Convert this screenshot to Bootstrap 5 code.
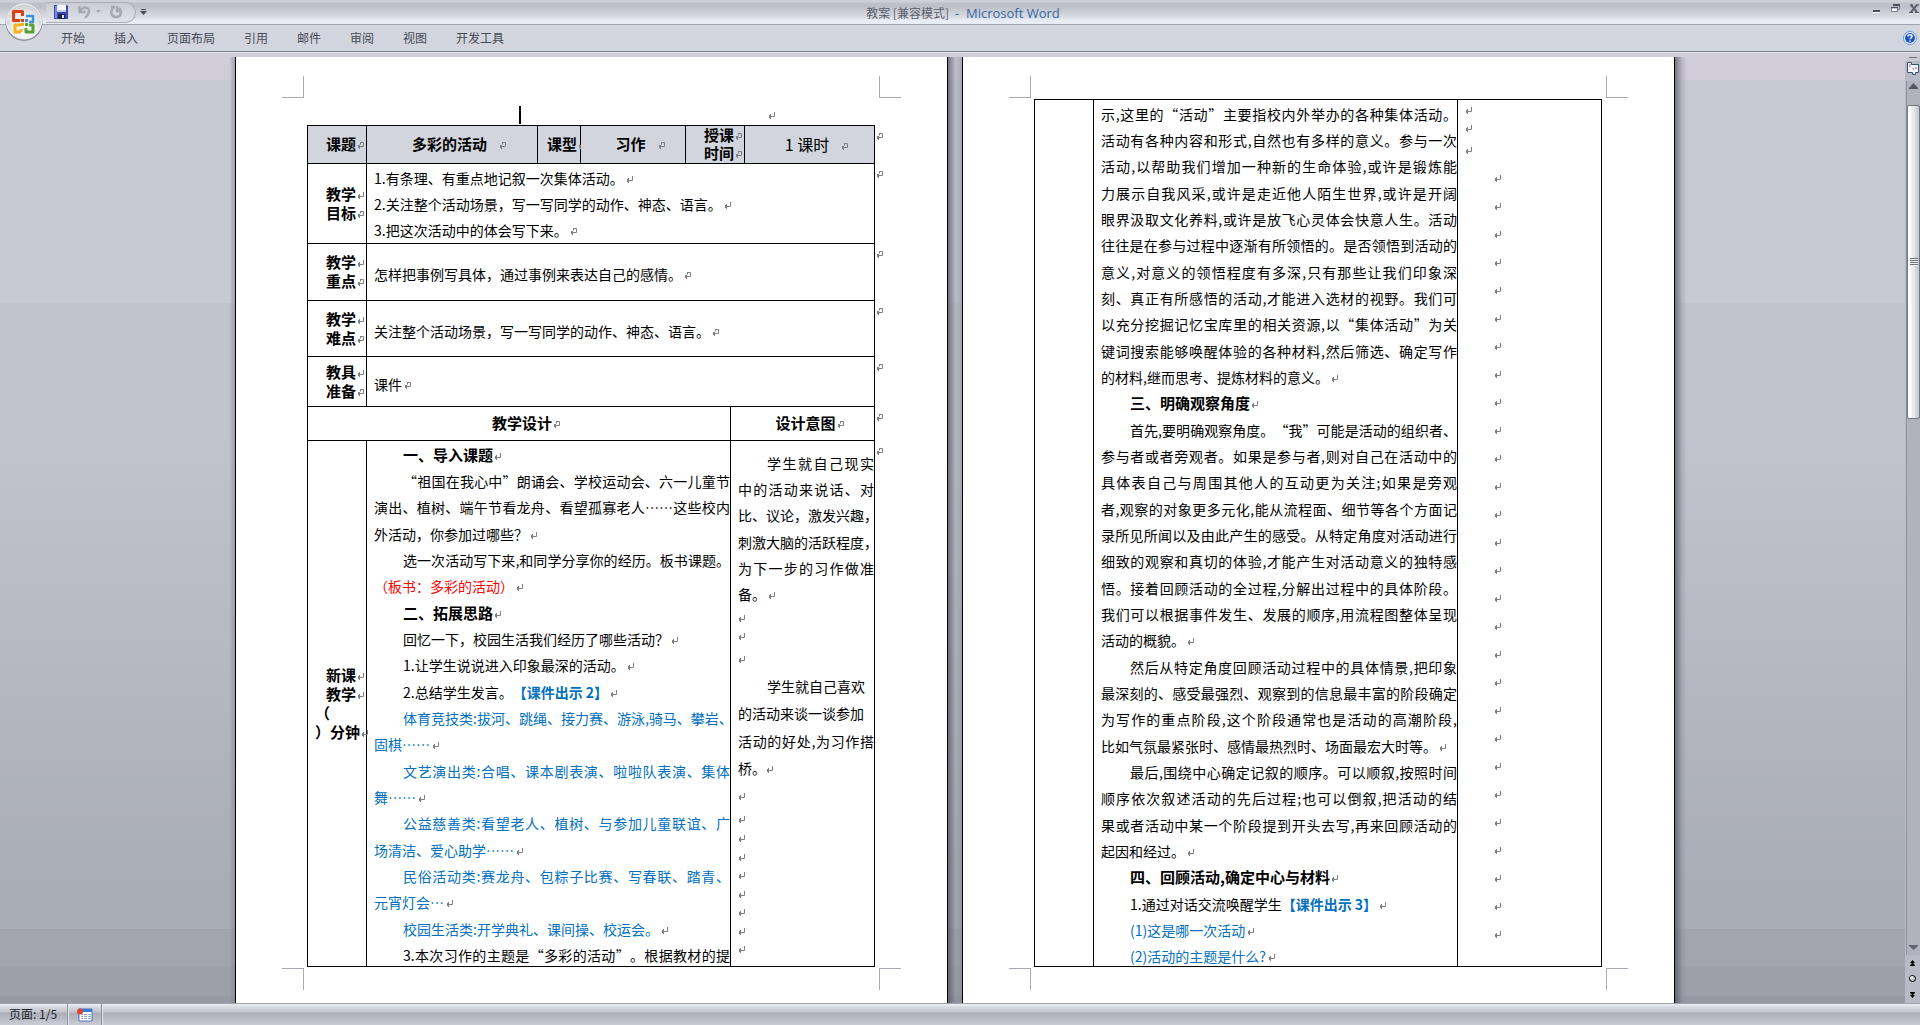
<!DOCTYPE html>
<html lang="zh-CN">
<head>
<meta charset="utf-8">
<meta name="viewport" content="width=device-width, initial-scale=1">
<title>教案 [兼容模式] - Microsoft Word</title>
<link rel="stylesheet" href="https://cdn.jsdelivr.net/npm/bootstrap@5.3.0/dist/css/bootstrap.min.css">
<style>
body{font-family:"Noto Sans CJK SC",sans-serif;font-size:12px;line-height:18px;color:#3b3f48;background:#d2d5dd;text-spacing-trim:space-all}
/* window chrome */
.titlebar{height:25px;background:linear-gradient(#cdd0d7 0 2px,#bdc0c9 3px 7px,#c6c9d0 10px,#d3d6dc 15px,#dcdfe5 18px,#e8ecf5 20px 24px);border-bottom:1px solid #a1a5ad}
.qat{height:21px;width:90px;margin-left:46px;padding-left:8px;border-radius:0 11px 11px 0;border:1px solid #a9adb6;border-left:0;background:linear-gradient(#c9ccd3,#dfe2e9)}
.qat button,.winbtns button,.navbtn,.orb,.helpbtn,.statbtn{border:0;background:none;padding:0;line-height:0;display:block}
.qat .undo{margin-left:10px}
.qat-more{border:0;background:none;padding:0;line-height:0}
.wtitle{font-size:12px;color:#5b606b;padding-left:6px}
.wtitle span{font-family:"Open Sans","Noto Sans CJK SC",sans-serif;font-size:13px;color:#3468a5}
.orb{left:4px;top:2px}
.tabs{height:26px;padding:0 3px 0 61px;gap:29px;background:#d2d5dd}
.tabs a{color:#454a55;text-decoration:none;font-size:12px}
.ribbon-edge{height:6px;background:#d0ced9;border-top:1px solid #7e828a}
.ribbon-edge::after{content:"";display:block;height:1px;background:#e2e4ea}
/* workspace */
.desk{background:linear-gradient(#d0cdd9 0 23px,#c7cad2 23px 246px,#c1c4cc 246px 380px,#a9adb5 830px 872px,#a2a5ad 872px 909px,#9da0a8 909px 939px,#989aa3 939px)}
.pages{gap:14px;padding-left:5px}
.sheet{position:relative;width:713px;flex:none;background:#fff;border:solid #000;border-width:0 1px;padding:0 71px;font-size:14px;color:#000}
.sheet::after,.sheet::before{content:"";position:absolute;top:0;bottom:0}
.sheet::after{left:100%;margin-left:1px;width:12px;background:linear-gradient(90deg,rgba(70,72,82,.65),rgba(120,125,138,.25) 60%,rgba(120,125,138,0))}
.sheet::before{right:100%;margin-right:1px;width:5px;background:linear-gradient(270deg,rgba(120,125,138,.5),rgba(120,125,138,.1))}
.crop{position:absolute;width:22px;height:22px;border:0 solid #a6aab3}
.crop-tl{left:46px;top:19px;border-width:0 1px 1px 0}
.crop-tr{right:46px;top:19px;border-width:0 0 1px 1px}
.crop-bl{left:46px;top:911px;border-width:1px 1px 0 0}
.crop-br{right:46px;top:911px;border-width:1px 0 0 1px}
.toppara{height:68px;padding:48px 101px 0 212px}
.caret{width:2px;height:18px;background:#000}
.topgap{height:42px}
/* lesson plan grid */
.plan{table-layout:fixed;border-collapse:collapse;width:568px}
.plan td,.plan th{border:1px solid #000;padding:0;font-weight:400;text-align:left;vertical-align:middle;white-space:nowrap;position:relative}
.plan .hd>*{background:#d2d5dd;line-height:18px}
.plan .ct{text-align:center;padding:0 0 2px 14px}
.plan .up{vertical-align:top;padding-left:7px}
.plan .mid{padding:4px 0 0 7px}
.plan .lbl{text-align:right;font-size:15px;font-weight:700;line-height:19px;padding:0 2px 2px 0}
.plan .hd .lbl{line-height:18px;padding-bottom:1px}
.plan .bt{font-size:15px;font-weight:700}
.plan .kind{padding:0 0 2px 9px}
.lesson{font-size:16px}
.brace{text-align:left;padding-left:7px}
.ln{line-height:26px;height:26px}
.ln:nth-child(3n){margin-bottom:1px}
.flow{padding-top:1px;margin-bottom:-9px}
.jl{text-align-last:justify}
.ind{padding-left:29px}
.hdg{font-size:15px;font-weight:700}
.blue{color:#0070c0}
.red{color:#f00}
.aside{padding-top:9px}
.l18{line-height:18px;height:18px}
.l19{line-height:19px;height:19px}
.l27{line-height:27px;height:27px}
.l28{line-height:28px;height:28px}
.pm{display:inline-block;width:7px;height:7px;margin-left:2px;vertical-align:1px;background:url("data:image/svg+xml,%3Csvg xmlns='http://www.w3.org/2000/svg' width='7' height='7'%3E%3Cpath d='M6.5 0v4.5H1M2.5 2v5M1.5 3v3' fill='none' stroke='%23808080'/%3E%3C/svg%3E")}
.lbl .pm,.bt .pm,.hdg .pm{margin-left:1px}
.l18 .pm,.l19 .pm,.l27 .pm:only-child,.l28 .pm{margin-left:0}
.pc{background-image:url("data:image/svg+xml,%3Csvg xmlns='http://www.w3.org/2000/svg' width='7' height='7'%3E%3Cpath d='M3 .5h3.5v4H1M3.5 0v2.5M2.5 3v4M1.5 3v3' fill='none' stroke='%23808080'/%3E%3C/svg%3E")}
.ct .sp{margin-left:12px}
.plan .rowend{position:absolute;right:-9px;top:7px}
/* scroll bar and status bar */
.vbar{width:15px;flex:none;background:#b8bbc5}
.track{background:#b0b3bc;border-left:1px solid #8f929b;margin-left:1px}
.scrollup{padding-bottom:12px!important}
.thumb{height:314px;border:1px solid #75777f;border-radius:2px;background:linear-gradient(90deg,#fff 0 3px,#eae8f0 4px 6px,#d3d6de 8px,#c3c6cf)}
.grip{width:8px;height:8px;background:repeating-linear-gradient(#70737b 0 1px,#f0f0f4 1px 2px)}
.status{height:22px;flex:none;border-top:1px solid #a0a3ab;background:linear-gradient(#e6e8ee 0 1px,#d0d3da 4px,#c2c5cd 8px,#abaeb7 9px,#b6b9c2 14px,#c7cad3 20px);color:#20232a}
.status>*{border-right:1px solid #8e9199;box-shadow:1px 0 #e4e6ec}
.pgno{width:68px;padding:0 0 2px 9px}
.stat-ic{width:34px}
</style>
<script src="https://cdn.jsdelivr.net/npm/bootstrap@5.3.0/dist/js/bootstrap.bundle.min.js"></script>
</head>
<body class="vh-100 d-flex flex-column overflow-hidden">
<header class="position-relative">
  <div class="titlebar d-flex align-items-center position-relative">
    <div class="qat d-flex align-items-center">
      <button type="button" aria-label="保存"><svg width="14" height="14" viewBox="0 0 14 14"><path d="M0 0h13l1 1v13H0z" fill="#3c46b4"/><path d="M1 1h2v12H1z" fill="#7f8be0"/><path d="M3 0h9v7H3z" fill="#f4f6ff"/><path d="M3 5h9v2H3z" fill="#c4cdf0"/><path d="M4 9h7v5H4z" fill="#1f2350"/><path d="M8 10h2v3H8z" fill="#dfe4fa"/></svg></button>
      <button type="button" class="undo" aria-label="撤消"><svg width="13" height="14" viewBox="0 0 13 14"><path d="M1.500 1v6h6M2 6c3-5 9-4 9 0 0 3-2 5-4 7" fill="none" stroke="#a4a8b3" stroke-width="2.400"/></svg></button>
      <button type="button" class="ms-1" aria-label="撤消列表"><svg width="7" height="4" viewBox="0 0 7 4"><path d="M1 0h5L3.500 3z" fill="#a4a8b3"/></svg></button>
      <button type="button" class="ms-2" aria-label="重复"><svg width="13" height="14" viewBox="0 0 13 14"><path d="M3 3c-3 3-2 9 3 9 6 0 6-7 3-9M7 1v5h4M1 2h4" fill="none" stroke="#a4a8b3" stroke-width="2.400"/></svg></button>
    </div>
    <button type="button" class="qat-more ms-1" aria-label="自定义快速访问工具栏"><svg width="7" height="6" viewBox="0 0 7 6"><path d="M1 0h5v1H1zM0 2h7L3.500 6z" fill="#4a4d55"/></svg></button>
    <div class="wtitle position-absolute top-0 start-50 translate-middle-x text-nowrap pt-1">教案 [兼容模式] <span>&nbsp;- &nbsp;Microsoft Word</span></div>
    <div class="winbtns d-flex gap-2 ms-auto pb-2">
      <button type="button" aria-label="最小化"><svg width="11" height="12" viewBox="0 0 11 12"><path d="M2 8h7v2H2z" fill="#4b4e57"/><path d="M2 10h7v1H2z" fill="#fff"/></svg></button>
      <button type="button" aria-label="还原"><svg width="11" height="12" viewBox="0 0 11 12"><path d="M3 3.500h6.500v4H8M1.500 5.500h6v4h-6z" fill="none" stroke="#6f7d98"/><path d="M3 2h7v2H3zM1 5h7v1H1z" fill="#484c58"/><path d="M2 7h5v2H2z" fill="#fff"/></svg></button>
      <button type="button" aria-label="关闭"><svg width="11" height="12" viewBox="0 0 11 12"><path d="M2 3l6 7M8 3l-6 7" stroke="#5c6475" stroke-width="2"/><path d="M1 3h3M7 3h3M0 10.500h4M6 10.500h4" stroke="#444854"/><path d="M1 11.500h3M7 11.500h3" stroke="#fff"/></svg></button>
    </div>
  </div>
  <nav class="tabs d-flex align-items-center">
    <a href="#">开始</a><a href="#">插入</a><a href="#">页面布局</a><a href="#">引用</a><a href="#">邮件</a><a href="#">审阅</a><a href="#">视图</a><a href="#">开发工具</a>
    <button type="button" class="helpbtn ms-auto" aria-label="帮助"><svg width="14" height="14" viewBox="0 0 14 14"><circle cx="7" cy="7" r="6.500" fill="#fff" stroke="#5a9bdc"/><circle cx="7" cy="7" r="5" fill="#1c50c8"/><path d="M5 5.500c0-2.200 4-2.200 4 0 0 1.300-2 1.300-2 2.700M7 9.500v1.300" fill="none" stroke="#fff" stroke-width="1.500"/></svg></button>
  </nav>
  <div class="ribbon-edge"></div>
  <button type="button" class="orb position-absolute" aria-label="Office 按钮"><svg width="40" height="40" viewBox="0 0 40 40">
    <defs><radialGradient id="og" cx=".5" cy=".75" r=".7"><stop offset="0" stop-color="#fff"/><stop offset=".6" stop-color="#e6e7ec"/><stop offset="1" stop-color="#b4b7c0"/></radialGradient></defs>
    <circle cx="20" cy="20.500" r="18.500" fill="#8b8e98"/><circle cx="20" cy="19.500" r="17.500" fill="url(#og)" stroke="#f8f8fb"/>
    <path d="M3 19a17 17 0 0 1 34 0q-17-5-34 0z" fill="#fff" opacity=".35"/>
    <g fill="none" stroke-linejoin="round"><path d="M16 18.500H9.500v-9h9V14" stroke="#d9420f" stroke-width="3"/><path d="M22 14h7v6h-4" stroke="#3d93d8" stroke-width="2.500"/><path d="M17 30h-6v-7h6M17 30v-3" stroke="#f6b21b" stroke-width="3"/><path d="M22 26v4h7v-7h-4" stroke="#57a331" stroke-width="3"/></g>
    <path d="M17 17h3v3h-3z" fill="#d9420f"/><path d="M21 17h3v3h-3z" fill="#3d93d8"/><path d="M17 21h3v3h-3z" fill="#f6b21b"/><path d="M21 21h3v3h-3z" fill="#57a331"/>
  </svg></button>
</header>

<main class="desk d-flex flex-grow-1 overflow-hidden">
  <div class="pages d-flex justify-content-center flex-grow-1 overflow-hidden">
    <section class="sheet">
      <span class="crop crop-tl"></span><span class="crop crop-tr"></span><span class="crop crop-bl"></span><span class="crop crop-br"></span>
      <div class="toppara d-flex justify-content-between align-items-center"><span class="caret"></span><i class="pm"></i></div>
      <table class="plan">
        <colgroup><col style="width:59px"><col style="width:171px"><col style="width:43px"><col style="width:105px"><col style="width:45px"><col style="width:14px"><col style="width:130px"></colgroup>
        <tbody>
        <tr class="hd" style="height:38px">
          <th class="lbl">课题<i class="pm pc"></i></th>
          <td class="ct bt">多彩的活动<i class="pm pc sp"></i></td>
          <th class="bt kind">课型<i class="pm pc"></i></th>
          <td class="ct bt">习作<i class="pm pc sp"></i></td>
          <th class="lbl" colspan="2">授课<i class="pm pc"></i><br>时间<i class="pm pc"></i></th>
          <td class="ct lesson">1 课时<i class="pm pc sp"></i><i class="pm pc rowend"></i></td>
        </tr>
        <tr style="height:80px">
          <th class="lbl">教学<i class="pm"></i><br>目标<i class="pm pc"></i></th>
          <td class="up" colspan="6"><div class="flow"><div class="ln">1.有条理、有重点地记叙一次集体活动。<i class="pm"></i></div><div class="ln">2.关注整个活动场景，写一写同学的动作、神态、语言。<i class="pm"></i></div><div class="ln">3.把这次活动中的体会写下来。<i class="pm pc"></i></div></div><i class="pm pc rowend"></i></td>
        </tr>
        <tr style="height:57px">
          <th class="lbl">教学<i class="pm"></i><br>重点<i class="pm pc"></i></th>
          <td class="mid" colspan="6">怎样把事例写具体，通过事例来表达自己的感情。<i class="pm pc"></i><i class="pm pc rowend"></i></td>
        </tr>
        <tr style="height:56px">
          <th class="lbl">教学<i class="pm"></i><br>难点<i class="pm pc"></i></th>
          <td class="mid" colspan="6">关注整个活动场景，写一写同学的动作、神态、语言。<i class="pm pc"></i><i class="pm pc rowend"></i></td>
        </tr>
        <tr style="height:50px">
          <th class="lbl">教具<i class="pm"></i><br>准备<i class="pm pc"></i></th>
          <td class="mid" colspan="6">课件<i class="pm pc"></i><i class="pm pc rowend"></i></td>
        </tr>
        <tr style="height:34px">
          <th class="ct bt" colspan="5">教学设计<i class="pm pc"></i></th>
          <th class="ct bt" colspan="2">设计意图<i class="pm pc"></i><i class="pm pc rowend"></i></th>
        </tr>
        <tr style="height:526px">
          <th class="lbl">新课<i class="pm"></i><br>教学<i class="pm"></i><div class="brace">（<br>）分钟<i class="pm"></i></div></th>
          <td class="up" colspan="4"><div class="flow">
            <div class="ln ind hdg">一、导入课题<i class="pm"></i></div>
            <div class="ln ind jl">“祖国在我心中”朗诵会、学校运动会、六一儿童节</div>
            <div class="ln jl">演出、植树、端午节看龙舟、看望孤寡老人……这些校内</div>
            <div class="ln">外活动，你参加过哪些？<i class="pm"></i></div>
            <div class="ln ind jl">选一次活动写下来,和同学分享你的经历。板书课题。</div>
            <div class="ln red">（板书：多彩的活动）<i class="pm"></i></div>
            <div class="ln ind hdg">二、拓展思路<i class="pm"></i></div>
            <div class="ln ind">回忆一下，校园生活我们经历了哪些活动？<i class="pm"></i></div>
            <div class="ln ind">1.让学生说说进入印象最深的活动。<i class="pm"></i></div>
            <div class="ln ind">2.总结学生发言。<b class="blue">【课件出示 2】</b><i class="pm"></i></div>
            <div class="ln ind jl blue">体育竞技类:拔河、跳绳、接力赛、游泳,骑马、攀岩、</div>
            <div class="ln blue">固棋……<i class="pm"></i></div>
            <div class="ln ind jl blue">文艺演出类:合唱、课本剧表演、啦啦队表演、集体</div>
            <div class="ln blue">舞……<i class="pm"></i></div>
            <div class="ln ind jl blue">公益慈善类:看望老人、植树、与参加儿童联谊、广</div>
            <div class="ln blue">场清洁、爱心助学……<i class="pm"></i></div>
            <div class="ln ind jl blue">民俗活动类:赛龙舟、包粽子比赛、写春联、踏青、</div>
            <div class="ln blue">元宵灯会…<i class="pm"></i></div>
            <div class="ln ind blue">校园生活类:开学典礼、课间操、校运会。<i class="pm"></i></div>
            <div class="ln ind jl">3.本次习作的主题是“多彩的活动”。根据教材的提</div>
          </div></td>
          <td class="up" colspan="2">
            <div class="aside">
              <div class="ln ind jl">学生就自己现实</div><div class="ln jl">中的活动来说话、对</div><div class="ln jl">比、议论，激发兴趣，</div><div class="ln jl">刺激大脑的活跃程度，</div><div class="ln jl">为下一步的习作做准</div><div class="ln">备。<i class="pm"></i></div>
            </div>
            <div><div class="l18"><i class="pm"></i></div><div class="l19"><i class="pm"></i></div><div class="l27"><i class="pm"></i></div></div>
            <div><div class="l28 ind">学生就自己喜欢</div><div class="l27">的活动来谈一谈参加</div><div class="l28 jl">活动的好处,为习作搭</div><div class="l27">桥。<i class="pm"></i></div><div class="l27"><i class="pm"></i></div></div>
            <div><div class="l19"><i class="pm"></i></div><div class="l19"><i class="pm"></i></div><div class="l18"><i class="pm"></i></div><div class="l19"><i class="pm"></i></div><div class="l18"><i class="pm"></i></div><div class="l19"><i class="pm"></i></div><div class="l18"><i class="pm"></i></div><div class="l18"><i class="pm"></i></div></div>
            <i class="pm pc rowend"></i>
          </td>
        </tr>
        </tbody>
      </table>
    </section>

    <section class="sheet">
      <span class="crop crop-tl"></span><span class="crop crop-tr"></span><span class="crop crop-bl"></span><span class="crop crop-br"></span>
      <div class="topgap"></div>
      <table class="plan">
        <colgroup><col style="width:59px"><col style="width:364px"><col style="width:144px"></colgroup>
        <tbody><tr style="height:867px">
          <td></td>
          <td class="up"><div class="flow">
            <div class="ln jl">示,这里的“活动”主要指校内外举办的各种集体活动。</div>
            <div class="ln jl">活动有各种内容和形式,自然也有多样的意义。参与一次</div>
            <div class="ln jl">活动,以帮助我们增加一种新的生命体验,或许是锻炼能</div>
            <div class="ln jl">力展示自我风采,或许是走近他人陌生世界,或许是开阔</div>
            <div class="ln jl">眼界汲取文化养料,或许是放飞心灵体会快意人生。活动</div>
            <div class="ln jl">往往是在参与过程中逐渐有所领悟的。是否领悟到活动的</div>
            <div class="ln jl">意义,对意义的领悟程度有多深,只有那些让我们印象深</div>
            <div class="ln jl">刻、真正有所感悟的活动,才能进入选材的视野。我们可</div>
            <div class="ln jl">以充分挖掘记忆宝库里的相关资源,以“集体活动”为关</div>
            <div class="ln jl">键词搜索能够唤醒体验的各种材料,然后筛选、确定写作</div>
            <div class="ln">的材料,继而思考、提炼材料的意义。<i class="pm"></i></div>
            <div class="ln ind hdg">三、明确观察角度<i class="pm"></i></div>
            <div class="ln ind jl">首先,要明确观察角度。“我”可能是活动的组织者、</div>
            <div class="ln jl">参与者或者旁观者。如果是参与者,则对自己在活动中的</div>
            <div class="ln jl">具体表自己与周围其他人的互动更为关注;如果是旁观</div>
            <div class="ln jl">者,观察的对象更多元化,能从流程面、细节等各个方面记</div>
            <div class="ln jl">录所见所闻以及由此产生的感受。从特定角度对活动进行</div>
            <div class="ln jl">细致的观察和真切的体验,才能产生对活动意义的独特感</div>
            <div class="ln jl">悟。接着回顾活动的全过程,分解出过程中的具体阶段。</div>
            <div class="ln jl">我们可以根据事件发生、发展的顺序,用流程图整体呈现</div>
            <div class="ln">活动的概貌。<i class="pm"></i></div>
            <div class="ln ind jl">然后从特定角度回顾活动过程中的具体情景,把印象</div>
            <div class="ln jl">最深刻的、感受最强烈、观察到的信息最丰富的阶段确定</div>
            <div class="ln jl">为写作的重点阶段,这个阶段通常也是活动的高潮阶段,</div>
            <div class="ln">比如气氛最紧张时、感情最热烈时、场面最宏大时等。<i class="pm"></i></div>
            <div class="ln ind jl">最后,围绕中心确定记叙的顺序。可以顺叙,按照时间</div>
            <div class="ln jl">顺序依次叙述活动的先后过程;也可以倒叙,把活动的结</div>
            <div class="ln jl">果或者活动中某一个阶段提到开头去写,再来回顾活动的</div>
            <div class="ln">起因和经过。<i class="pm"></i></div>
            <div class="ln ind hdg">四、回顾活动,确定中心与材料<i class="pm"></i></div>
            <div class="ln ind">1.通过对话交流唤醒学生<b class="blue">【课件出示 3】</b><i class="pm"></i></div>
            <div class="ln ind blue">(1)这是哪一次活动<i class="pm"></i></div>
            <div class="ln ind blue">(2)活动的主题是什么?<i class="pm"></i></div>
          </div></td>
          <td class="up">
            <div><div class="l18"><i class="pm"></i></div><div class="l18"><i class="pm"></i></div><div class="l27"><i class="pm"></i></div></div>
            <div class="ind" id="blankParas"></div>
          </td>
        </tr></tbody>
      </table>
    </section>
  </div>

  <div class="vbar d-flex flex-column">
    <svg width="15" height="24" viewBox="0 0 15 24" class="flex-shrink-0 d-block"><path d="M0 0h15v4H0z" fill="#c7cad2"/><path d="M4 -1h8v2H4z" fill="#6d7078"/><path d="M2.500 5.500h4v2h7v8h-3v2h-3v-2h-5z" fill="#f4f6fb" stroke="#33506f"/><path d="M5 7v3M8 11l1 2M11 10v2" stroke="#8d6b8f"/></svg>
    <div class="track flex-grow-1 d-flex flex-column">
      <button type="button" class="navbtn scrollup" aria-label="向上滚动"><svg width="13" height="12" viewBox="0 0 13 12"><path d="M2 7L6.500 2 11 7v1H2z" fill="#53565f"/></svg></button>
      <div class="thumb d-flex align-items-center justify-content-center"><span class="grip"></span></div>
      <button type="button" class="navbtn mt-auto pb-1" aria-label="向下滚动"><svg width="13" height="6" viewBox="0 0 13 6"><path d="M2 0h9v1L6.500 5 2 1z" fill="#5f6672"/></svg></button>
    </div>
    <button type="button" class="navbtn" aria-label="前一页"><svg width="15" height="16" viewBox="0 0 15 16"><path d="M7.500 5l2.500 3H8.500v1L10 10v1H5v-1l1.500-1V8H5z"/></svg></button>
    <button type="button" class="navbtn" aria-label="选择浏览对象"><svg width="15" height="16" viewBox="0 0 15 16"><circle cx="7.500" cy="7.500" r="3" fill="#c6c8cc" stroke="#000"/><circle cx="6.500" cy="6.500" r="1.200" fill="#fff"/></svg></button>
    <button type="button" class="navbtn" aria-label="下一页"><svg width="15" height="16" viewBox="0 0 15 16"><path d="M5 5h5v1L8.500 7v1H10l-2.500 3L5 8h1.500V7L5 6z"/></svg></button>
  </div>
</main>

<footer class="status d-flex">
  <div class="pgno d-flex align-items-center">页面: 1/5</div>
  <div class="stat-ic d-flex align-items-center justify-content-center"><button type="button" class="statbtn" aria-label="宏录制"><svg width="16" height="14" viewBox="0 0 16 14"><path d="M2 1h13v12H2z" fill="#fff" stroke="#4d74b8"/><path d="M2 1h13v3H2z" fill="#3c78d8"/><path d="M4 6.500h2M7 6.500h3M11 6.500h3M4 8.500h2M7 8.500h3M11 8.500h3M4 10.500h2M7 10.500h3M11 10.500h3" stroke="#93a6cc"/><circle cx="3" cy="3.500" r="3" fill="#d8452a"/></svg></button></div>
</footer>
<script>
/* the empty paragraphs of the right-hand column */
document.getElementById('blankParas').innerHTML = '<div class="l28"><i class="pm"></i></div>'.repeat(28);
</script>
</body>
</html>
